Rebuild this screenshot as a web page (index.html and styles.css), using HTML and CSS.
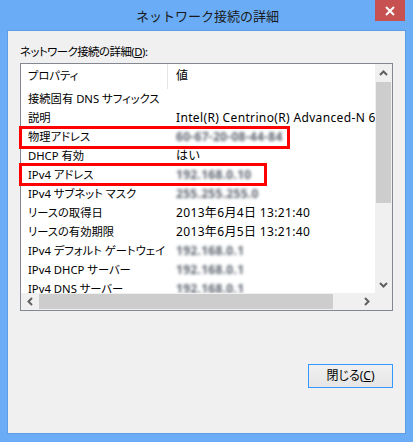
FILE: index.html
```html
<!DOCTYPE html>
<html lang="ja">
<head>
<meta charset="utf-8">
<title>ネットワーク接続の詳細</title>
<link rel="stylesheet" href="styles.css">
</head>
<body>
<div class="window">
  <div class="titlebar">
    <span></span>
    <div class="title">ネットワーク接続の詳細</div>
    <div class="close">
      <svg width="10" height="10" viewBox="0 0 10 10"><path d="M1 1 L9 9 M9 1 L1 9" stroke="#fff" stroke-width="2"/></svg>
    </div>
  </div>
  <div class="client">
    <div class="label">ネットワーク接続の詳細(<u>D</u>):</div>
    <div class="listbox">
      <div class="grid">
        <div class="rows">
          <div class="head">
            <div class="c1">プロパティ</div>
            <div class="c2">値</div>
          </div>
          <div class="row"><div class="c1">接続固有 DNS サフィックス</div><div class="c2"></div></div>
          <div class="row"><div class="c1">説明</div><div class="c2">Intel(R) Centrino(R) Advanced-N 6205</div></div>
          <div class="row"><div class="c1">物理アドレス</div><div class="c2"><span class="blur">60-67-20-08-44-84</span></div></div>
          <div class="row"><div class="c1">DHCP 有効</div><div class="c2">はい</div></div>
          <div class="row"><div class="c1">IPv4 アドレス</div><div class="c2"><span class="blur">192.168.0.10</span></div></div>
          <div class="row"><div class="c1">IPv4 サブネット マスク</div><div class="c2"><span class="blur">255.255.255.0</span></div></div>
          <div class="row"><div class="c1">リースの取得日</div><div class="c2">2013年6月4日 13:21:40</div></div>
          <div class="row"><div class="c1">リースの有効期限</div><div class="c2">2013年6月5日 13:21:40</div></div>
          <div class="row"><div class="c1">IPv4 デフォルト ゲートウェイ</div><div class="c2"><span class="blur">192.168.0.1</span></div></div>
          <div class="row"><div class="c1">IPv4 DHCP サーバー</div><div class="c2"><span class="blur">192.168.0.1</span></div></div>
          <div class="row"><div class="c1">IPv4 DNS サーバー</div><div class="c2"><span class="blur">192.168.0.1</span></div></div>
        </div>
        <div class="vscroll">
          <div class="arrow"><svg width="9" height="6" viewBox="0 0 9 6"><path d="M1 5 L4.5 1.5 L8 5" fill="none" stroke="#606060" stroke-width="2"/></svg></div>
          <div class="vtrack"><div class="vthumb"></div></div>
          <div class="arrow"><svg width="9" height="6" viewBox="0 0 9 6"><path d="M1 1 L4.5 4.5 L8 1" fill="none" stroke="#606060" stroke-width="2"/></svg></div>
        </div>
        <div class="hscroll">
          <div class="harrow"><svg width="6" height="9" viewBox="0 0 6 9"><path d="M5 1 L1.5 4.5 L5 8" fill="none" stroke="#606060" stroke-width="2"/></svg></div>
          <div class="htrack"><div class="hthumb"></div></div>
          <div class="harrow"><svg width="6" height="9" viewBox="0 0 6 9"><path d="M1 1 L4.5 4.5 L1 8" fill="none" stroke="#606060" stroke-width="2"/></svg></div>
        </div>
        <div class="corner"></div>
      </div>
      <div class="mark m1"></div>
      <div class="mark m2"></div>
    </div>
    <div class="actions">
      <button class="btn">閉じる(<u>C</u>)</button>
    </div>
  </div>
</div>
</body>
</html>
```

FILE: styles.css
```css
* { box-sizing: border-box; }
html, body {
  margin: 0;
  padding: 0;
  width: 413px;
  height: 442px;
  overflow: hidden;
  font-family: "Noto Sans", "Noto Sans CJK JP", sans-serif;
  font-feature-settings: "palt";
  font-size: 12px;
  color: #000;
}
.window {
  width: 413px;
  height: 442px;
  background: #6aacf5;
  display: flex;
  flex-direction: column;
}
.titlebar {
  height: 30px;
  display: grid;
  grid-template-columns: 1fr auto 1fr;
  align-items: start;
}
.title {
  font-size: 13px;
  line-height: 16px;
  padding-top: 8px;
  color: #1a1a1a;
  padding-left: 2px;
  font-feature-settings: normal;
}
.close {
  justify-self: end;
  margin-right: 8px;
  width: 30px;
  height: 21px;
  background: #c75050;
  display: flex;
  align-items: center;
  justify-content: center;
}
.close svg { display: block; }
.client {
  margin: 0 7px;
  height: 404px;
  background: #f0f0f0;
  border: 1px solid #5d9de6;
  padding: 0 12px;
  display: flex;
  flex-direction: column;
}
.label {
  font-size: 11.4px;
  letter-spacing: -0.5px;
  line-height: 16px;
  padding-top: 13px;
  height: 32px;
}
.listbox {
  position: relative;
  width: 373px;
  height: 248px;
  border: 1px solid #828790;
  background: #fff;
}
.grid {
  display: grid;
  grid-template-columns: 354px 17px;
  grid-template-rows: 229px 17px;
  height: 100%;
}
.rows {
  overflow: hidden;
}
.head, .row {
  display: flex;
  white-space: nowrap;
}
.head { height: 25px; }
.head .c1, .head .c2 { line-height: 23px; }
.head .c1 { border-right: 1px solid #e5e5e5; }
.row { height: 19px; line-height: 19px; }
.c1 { width: 147px; flex: none; padding-left: 7px; overflow: hidden; font-size: 11.3px; }
.c2 { padding-left: 8px; flex: none; letter-spacing: 0.35px; }
.blur {
  filter: blur(1.4px);
  color: #5e6570;
  letter-spacing: 0.3px;
  font-weight: bold;
}
.vscroll {
  background: #f0f0f0;
  display: flex;
  flex-direction: column;
}
.arrow {
  height: 17px;
  display: flex;
  align-items: center;
  justify-content: center;
}
.vtrack { flex: 1; padding: 1px 1px 0; }
.vthumb { height: 121px; background: #cdcdcd; }
.hscroll {
  background: #f0f0f0;
  display: flex;
}
.harrow {
  width: 17px;
  display: flex;
  align-items: center;
  justify-content: center;
}
.htrack { flex: 1; padding: 1px 0; }
.hthumb { margin-left: 1px; width: 294px; height: 100%; background: #cdcdcd; }
.corner { background: #f0f0f0; }
.mark {
  position: absolute;
  left: -2px;
  height: 23px;
  border: 3px solid #ff0000;
}
.m1 { top: 62px; width: 271px; }
.m2 { top: 99px; width: 248px; }
.actions {
  display: flex;
  justify-content: flex-end;
  margin-top: 53px;
}
.btn {
  width: 85px;
  height: 24px;
  border: 1px solid #3399ff;
  background: linear-gradient(#f0f0f0, #e5e5e5);
  font-family: inherit;
  font-feature-settings: "palt";
  font-size: 12px;
  color: #000;
  padding: 0;
  line-height: 20px;
}
```
